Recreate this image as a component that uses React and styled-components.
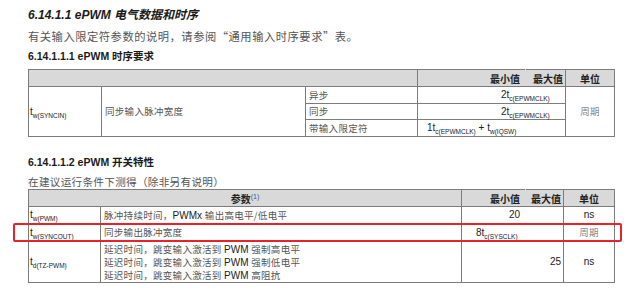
import React from "react";
import styled, { createGlobalStyle } from "styled-components";

const Global = createGlobalStyle`
  html, body { margin: 0; padding: 0; background: #fff; }
  body { font-family: "Liberation Sans", "Noto Sans CJK SC", sans-serif; }
`;

const Page = styled.div`
  width: 640px;
  height: 288px;
  box-sizing: border-box;
  padding: 6px 0 0 28px;
  overflow: hidden;
  background: #fff;
`;

const Heading = styled.div`
  margin-top: ${(p) => p.$mt || 0}px;
  font-size: ${(p) => p.$size || 11}px;
  line-height: ${(p) => p.$lh || 14}px;
  font-weight: bold;
  font-style: ${(p) => (p.$italic ? "italic" : "normal")};
  color: #1a1a1a;
  white-space: nowrap;
`;

const Para = styled.div`
  margin-top: ${(p) => p.$mt || 0}px;
  font-family: "Noto Sans CJK SC", sans-serif;
  font-size: ${(p) => p.$size || 11}px;
  line-height: ${(p) => p.$lh || 14}px;
  letter-spacing: ${(p) => p.$ls || 0}px;
  color: #555;
  white-space: nowrap;
`;

const TableWrap = styled.div`
  position: relative;
  margin-top: ${(p) => p.$mt || 0}px;
  width: 586px;
`;

const Table = styled.table`
  border-collapse: collapse;
  table-layout: fixed;
  width: 586px;
  font-size: 9.5px;
`;

const Row = styled.tr`
  height: ${(p) => p.$h}px;
`;

const HeadCell = styled.th`
  background: #d9d9d9;
  border: 1px solid #7c7c7c;
  ${(p) => p.$noLeft && "border-left-color: #d9d9d9;"}
  ${(p) => p.$noRight && "border-right-color: #d9d9d9;"}
  padding: 0 ${(p) => p.$pr ?? 4}px 0 4px;
  text-align: ${(p) => p.$align || "center"};
  font-family: "Liberation Sans", "Noto Sans CJK SC", sans-serif;
  font-weight: bold;
  font-size: 10px;
  color: #222;
  white-space: nowrap;
`;

const Cell = styled.td`
  border: 1px solid #7c7c7c;
  ${(p) => p.$noLeft && "border-left-color: transparent;"}
  ${(p) => p.$noRight && "border-right-color: transparent;"}
  padding: 0 ${(p) => p.$pr ?? 3}px 0 ${(p) => p.$pl ?? 3}px;
  text-align: ${(p) => p.$align || "left"};
  vertical-align: middle;
  font-family: "Liberation Sans", "Noto Sans CJK SC", sans-serif;
  color: ${(p) => p.$color || "#222"};
  white-space: nowrap;
  line-height: 12px;
`;

const Cjk = styled.span`
  font-family: "Noto Sans CJK SC", sans-serif;
  color: ${(p) => p.$color || "#555"};
  font-size: 9.5px;
  letter-spacing: 0.3px;
`;

const Sym = styled.span`
  font-size: 10px;
  color: #222;
`;

const Sub = styled.sub`
  font-size: 6.5px;
  vertical-align: -3px;
  line-height: 0;
`;

const Note = styled.sup`
  font-size: 7px;
  color: #2a5db0;
  vertical-align: 4px;
  line-height: 0;
  font-weight: normal;
`;

const Lines = styled.div`
  display: flex;
  flex-direction: column;
  line-height: 12px;
`;

const Highlight = styled.div`
  position: absolute;
  left: -15px;
  top: 34px;
  width: 609px;
  height: 19px;
  box-sizing: border-box;
  border: 2px solid #e8222b;
  border-radius: 2px;
  pointer-events: none;
`;

const T = ({ s }) => (
  <Sym>
    t<Sub>{s}</Sub>
  </Sym>
);

export default function App() {
  return (
    <>
      <Global />
      <Page>
        <Heading $size={12} $lh={18} $italic>
          6.14.1.1 ePWM 电气数据和时序
        </Heading>
        <Para $mt={4} $size={11.3} $lh={16} $ls={0.5}>
          有关输入限定符参数的说明，请参阅“通用输入时序要求”表。
        </Para>
        <Heading $mt={5} $size={10.5} $lh={14}>
          6.14.1.1.1 ePWM 时序要求
        </Heading>

        <TableWrap $mt={6}>
          <Table>
            <colgroup>
              <col style={{ width: 73 }} />
              <col style={{ width: 204 }} />
              <col style={{ width: 112 }} />
              <col style={{ width: 108 }} />
              <col style={{ width: 40 }} />
              <col style={{ width: 49 }} />
            </colgroup>
            <tbody>
              <Row $h={17}>
                <HeadCell colSpan={3} />
                <HeadCell $align="right" $pr={5} $noRight>
                  最小值
                </HeadCell>
                <HeadCell $align="right" $pr={2} $noLeft>
                  最大值
                </HeadCell>
                <HeadCell>单位</HeadCell>
              </Row>
              <Row $h={17}>
                <Cell rowSpan={3} $pl={1}>
                  <T s="w(SYNCIN)" />
                </Cell>
                <Cell rowSpan={3}>
                  <Cjk>同步输入脉冲宽度</Cjk>
                </Cell>
                <Cell>
                  <Cjk>异步</Cjk>
                </Cell>
                <Cell colSpan={2} $align="left" $pl={83}>
                  <Sym>2</Sym>
                  <T s="c(EPWMCLK)" />
                </Cell>
                <Cell rowSpan={3} $align="center">
                  <Cjk $color="#888">周期</Cjk>
                </Cell>
              </Row>
              <Row $h={16}>
                <Cell>
                  <Cjk>同步</Cjk>
                </Cell>
                <Cell colSpan={2} $align="left" $pl={83}>
                  <Sym>2</Sym>
                  <T s="c(EPWMCLK)" />
                </Cell>
              </Row>
              <Row $h={17}>
                <Cell>
                  <Cjk>带输入限定符</Cjk>
                </Cell>
                <Cell colSpan={2} $align="left" $pl={9}>
                  <Sym>1</Sym>
                  <T s="c(EPWMCLK)" />
                  <Sym> + </Sym>
                  <T s="w(IQSW)" />
                </Cell>
              </Row>
            </tbody>
          </Table>
        </TableWrap>

        <Heading $mt={18} $size={10.5} $lh={14}>
          6.14.1.1.2 ePWM 开关特性
        </Heading>
        <Para $mt={6} $size={10.6} $lh={14} $ls={0.3}>
          在建议运行条件下测得（除非另有说明）
        </Para>

        <TableWrap>
          <Table>
            <colgroup>
              <col style={{ width: 72 }} />
              <col style={{ width: 361 }} />
              <col style={{ width: 64 }} />
              <col style={{ width: 38 }} />
              <col style={{ width: 51 }} />
            </colgroup>
            <tbody>
              <Row $h={17}>
                <HeadCell colSpan={2}>
                  参数<Note>(1)</Note>
                </HeadCell>
                <HeadCell $align="right" $pr={5} $noRight>
                  最小值
                </HeadCell>
                <HeadCell $align="right" $pr={2} $noLeft>
                  最大值
                </HeadCell>
                <HeadCell>单位</HeadCell>
              </Row>
              <Row $h={17}>
                <Cell $pl={1}>
                  <T s="w(PWM)" />
                </Cell>
                <Cell>
                  <Cjk>脉冲持续时间，</Cjk>
                  <Sym>PWMx </Sym>
                  <Cjk>输出高电平/低电平</Cjk>
                </Cell>
                <Cell $align="right" $pr={5} $noRight>
                  <Sym>20</Sym>
                </Cell>
                <Cell $noLeft />
                <Cell $align="center">
                  <Sym>ns</Sym>
                </Cell>
              </Row>
              <Row $h={18}>
                <Cell $pl={1}>
                  <T s="w(SYNCOUT)" />
                </Cell>
                <Cell>
                  <Cjk>同步输出脉冲宽度</Cjk>
                </Cell>
                <Cell colSpan={2} $pl={14}>
                  <Sym>8</Sym>
                  <T s="c(SYSCLK)" />
                </Cell>
                <Cell $align="center">
                  <Cjk $color="#888">周期</Cjk>
                </Cell>
              </Row>
              <Row $h={41}>
                <Cell $pl={1}>
                  <T s="d(TZ-PWM)" />
                </Cell>
                <Cell>
                  <Lines>
                    <span>
                      <Cjk>延迟时间，跳变输入激活到 </Cjk>
                      <Sym>PWM </Sym>
                      <Cjk>强制高电平</Cjk>
                    </span>
                    <span>
                      <Cjk>延迟时间，跳变输入激活到 </Cjk>
                      <Sym>PWM </Sym>
                      <Cjk>强制低电平</Cjk>
                    </span>
                    <span>
                      <Cjk>延迟时间，跳变输入激活到 </Cjk>
                      <Sym>PWM </Sym>
                      <Cjk>高阻抗</Cjk>
                    </span>
                  </Lines>
                </Cell>
                <Cell $noRight />
                <Cell $align="right" $pr={2} $noLeft>
                  <Sym>25</Sym>
                </Cell>
                <Cell $align="center">
                  <Sym>ns</Sym>
                </Cell>
              </Row>
            </tbody>
          </Table>
          <Highlight />
        </TableWrap>
      </Page>
    </>
  );
}
